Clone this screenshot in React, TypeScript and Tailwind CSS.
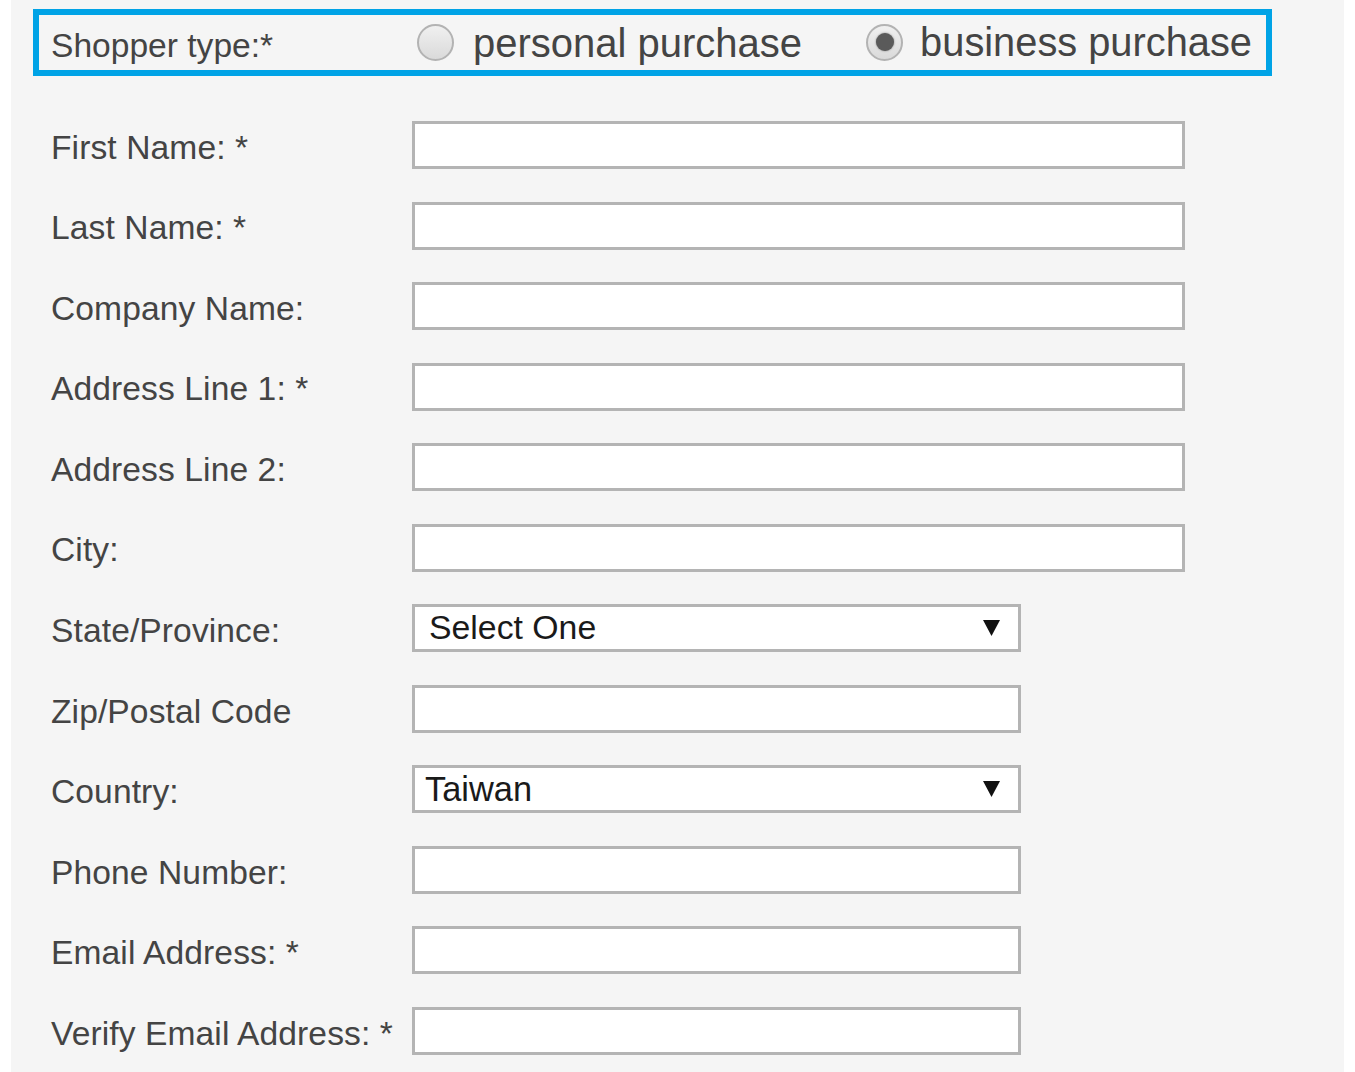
const fields: { label: string; short?: boolean; select?: string }[] = [
  { label: "First Name: *" },
  { label: "Last Name: *" },
  { label: "Company Name:" },
  { label: "Address Line 1: *" },
  { label: "Address Line 2:" },
  { label: "City:" },
  { label: "State/Province:", short: true, select: "Select One" },
  { label: "Zip/Postal Code", short: true },
  { label: "Country:", short: true, select: "Taiwan" },
  { label: "Phone Number:", short: true },
  { label: "Email Address: *", short: true },
  { label: "Verify Email Address: *", short: true },
];

function Radio({ checked }: { checked?: boolean }) {
  return (
    <span className="flex h-[37px] w-[37px] shrink-0 items-center justify-center rounded-full border-2 border-[#b3b3b3] bg-gradient-to-b from-[#f0f0f0] to-[#dadada]">
      {checked && <span className="h-[18px] w-[18px] rounded-full bg-[#5a5a5a] shadow-[0_0_2px_#777]" />}
    </span>
  );
}

function Field({ label, short, select }: { label: string; short?: boolean; select?: string }) {
  const width = short ? "w-[609px]" : "w-[773px]";
  return (
    <div className="flex h-[48px] items-center">
      <div className="w-[361px] shrink-0 pt-[5px] text-[33.6px] leading-none tracking-[0.1px] text-[#444]">{label}</div>
      {select ? (
        <div
          className={`${width} flex h-[48px] items-center justify-between border-[3px] border-[#b4b4b4] bg-white pr-[18px] ${
            select === "Taiwan" ? "pl-[10px] text-[34.4px]" : "pl-[14px] text-[33.8px]"
          } leading-none text-[#1a1a1a]`}
        >
          <span>{select}</span>
          <svg width="17" height="16" viewBox="0 0 17 16">
            <polygon points="0,0 17,0 8.5,16" fill="#111" />
          </svg>
        </div>
      ) : (
        <input type="text" className={`${width} h-[48px] border-[3px] border-[#b4b4b4] bg-white outline-none`} />
      )}
    </div>
  );
}

export default function App() {
  return (
    <div className="min-h-screen bg-white" style={{ fontFamily: '"Liberation Sans", Arial, sans-serif' }}>
      <div className="ml-[11px] min-h-[1072px] w-[1333px] bg-[#f5f5f5] pt-[9px]">
        <div className="ml-[22px] flex h-[67px] w-[1239px] items-center border-[6px] border-[#00a3e6] text-[#444]">
          <div className="w-[378px] shrink-0 pl-[12px] pt-[6px] text-[33.6px] leading-none">Shopper type:*</div>
          <div className="flex items-center gap-[19px]">
            <Radio />
            <span className="text-[40px] leading-none">personal purchase</span>
          </div>
          <div className="ml-[64px] flex items-center gap-[17px]">
            <Radio checked />
            <span className="text-[39.8px] leading-none">business purchase</span>
          </div>
        </div>
        <div className="mt-[45px] flex flex-col gap-[32.55px] pl-[40px]">
          {fields.map((f) => (
            <Field key={f.label} label={f.label} short={f.short} select={f.select} />
          ))}
        </div>
      </div>
    </div>
  );
}
